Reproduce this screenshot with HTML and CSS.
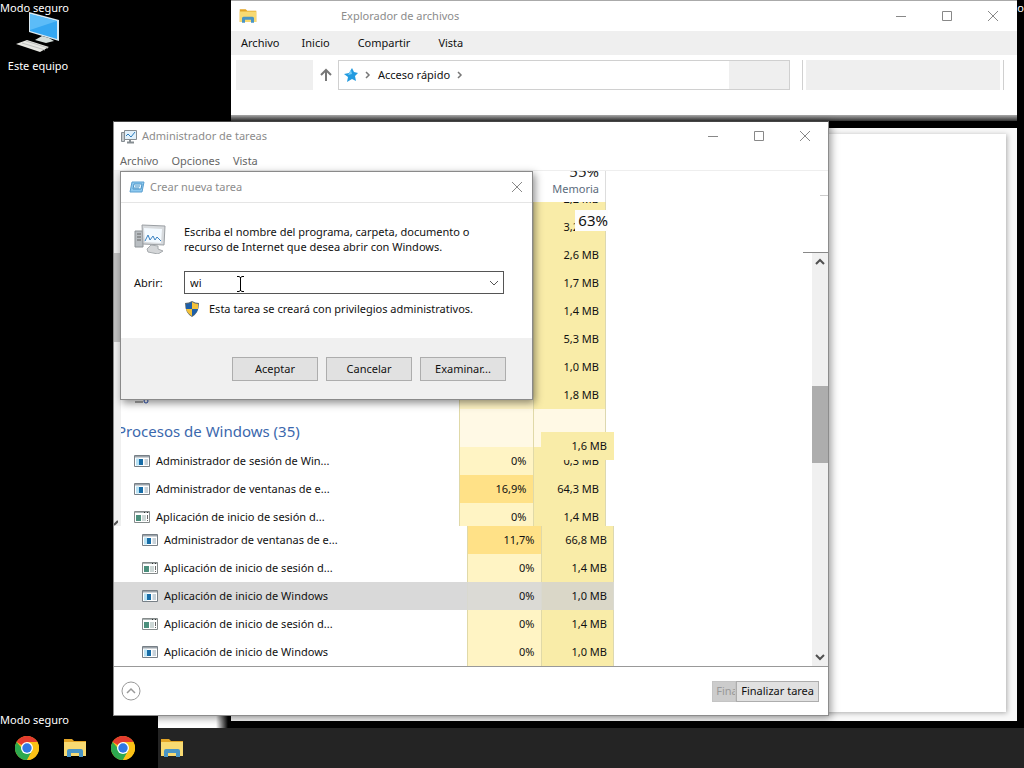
FILE: index.html
```html
<!DOCTYPE html>
<html lang="es">
<head>
  <meta charset="UTF-8">
  <meta name="viewport" content="width=device-width, initial-scale=1.0">
  <title>Administrador de tareas</title>
  <link rel="stylesheet" href="styles.css">
</head>
<body>
  <!-- shared icons -->
  <svg class="defs" width="0" height="0">
    <symbol id="folder" viewBox="0 0 24 20">
      <path d="M1 1h8l2 2h12v15H1z" fill="#e3a526"/>
      <path d="M1 4h22v14H1z" fill="#f8da72"/>
      <path d="M4 19v-6q0-2 2-2h12q2 0 2 2v6h-4v-4H8v4z" fill="#4a95c5"/>
    </symbol>
    <symbol id="chrome" viewBox="0 0 24 24">
      <circle cx="12" cy="12" r="12" fill="#fbc116"/>
      <path d="M12 12 1.600 6A12 12 0 0 1 22.400 6z" fill="#e33b2e"/>
      <path d="M12 12H6.800L1.600 6A12 12 0 0 0 12 24l5-9z" fill="#2da94f"/>
      <path d="M12 6h10.400A12 12 0 0 1 12 24l5.200-9z" fill="#fbc116"/>
      <circle cx="12" cy="12" r="6" fill="#fff"/>
      <circle cx="12" cy="12" r="4.700" fill="#2f78e4"/>
    </symbol>
    <symbol id="app" viewBox="0 0 16 12">
      <path d="M.5.5h15v11H.5z" fill="#fff" stroke="#777f86"/>
      <path d="M1 1h14v1.500H1z" fill="#9ba3aa"/>
      <path d="M2 3.500h3v7H2z" fill="#b9e2f4"/>
      <path d="M5 4h4v6H5z" fill="#176da8"/>
      <path d="M10.500 5H14M10.500 7H14M10.500 9H14" stroke="#8fa5b5"/>
    </symbol>
    <symbol id="app-green" viewBox="0 0 16 12">
      <path d="M.5.5h15v11H.5z" fill="#fff" stroke="#858b8b"/>
      <path d="M1 1h14v1H1z" fill="#adb5b5"/>
      <path d="M10 1h1v1h-1zM13 1h1v1h-1z" fill="#333"/>
      <path d="M2 4h5v6H2z" fill="#4b8f7c"/>
      <path d="M8 5h4M8 7h4M8 9h4" stroke="#9bb0ad"/>
      <path d="M13.500 4v4M13.500 9v1" stroke="#666"/>
    </symbol>
    <symbol id="monitor" viewBox="0 0 32 30">
      <path d="M1 7h8v16H1z" fill="#b9bec2" stroke="#8d9296"/>
      <path d="M3 10h4M3 13h4M3 16h4" stroke="#666"/>
      <path d="m8 1 23 1-1 19-21-1z" fill="#d7dadd" stroke="#9b9fa3"/>
      <path d="m10 4 18 1-1 14-16-1z" fill="#f4faff"/>
      <path d="m11 17 3-6 2 5 3-4 2 4 2-3 4 4" fill="none" stroke="#3b83c2"/>
      <path d="m17 21 7 1v3l5 2-5 3-10-2-1-3z" fill="#d4d6d8" stroke="#a6aaad"/>
    </symbol>
    <symbol id="monitor-small" viewBox="0 0 16 15">
      <path d="M.5 3.500h3v9h-3z" fill="#c5cacd" stroke="#868d92"/>
      <path d="M3.500 1.500h12v9h-12z" fill="#e2f1fb" stroke="#868d92"/>
      <path d="m5 7 2-2 3 3 4-5" fill="none" stroke="#2f7fc0"/>
      <path d="M9 11v2M6 13.500h7" stroke="#868d92" stroke-width="2"/>
    </symbol>
    <symbol id="min" viewBox="0 0 12 12"><path d="M1 6.500h10" fill="none" stroke="currentColor"/></symbol>
    <symbol id="max" viewBox="0 0 12 12"><path d="M1.500 1.500h9v9h-9z" fill="none" stroke="currentColor"/></symbol>
    <symbol id="close" viewBox="0 0 12 12"><path d="m1 1 10 10M11 1 1 11" fill="none" stroke="currentColor"/></symbol>
  </svg>

  <main class="desktop">
    <span class="safe-mode top-left">Modo seguro</span>
    <span class="safe-mode top-right">o</span>
    <span class="safe-mode bottom-left">Modo seguro</span>

    <a class="desktop-icon" href="#">
      <svg width="46" height="42" viewBox="0 0 46 42">
        <path d="m14 0 30 8v21l-30-9z" fill="#d9e9f2"/>
        <path d="m15 2 27 7v18l-27-8z" fill="#35a7f2"/>
        <path d="m15 2 27 7-27 9z" fill="#5cbcf8"/>
        <path d="m27 24 7 2 5 3-8 2-11-3z" fill="#d5dedb"/>
        <path d="m12 28 22 7-9 5-24-8z" fill="#e8e8e3"/>
        <path d="m7 31 23 7m-19-9 22 7" stroke="#c0c2c0" fill="none"/>
      </svg>
      <span>Este equipo</span>
    </a>

    <section class="ghost-window"><div class="ghost-page"></div></section>
    <div class="ghost-edge"></div>

    <section class="window explorer">
      <header class="titlebar">
        <svg width="18" height="16"><use href="#folder"/></svg>
        <h2>Explorador de archivos</h2>
        <div class="window-buttons">
          <button aria-label="Minimizar"><svg width="12" height="12"><use href="#min"/></svg></button>
          <button aria-label="Maximizar"><svg width="12" height="12"><use href="#max"/></svg></button>
          <button aria-label="Cerrar"><svg width="12" height="12"><use href="#close"/></svg></button>
        </div>
      </header>
      <nav class="ribbon">
        <a href="#">Archivo</a>
        <a href="#">Inicio</a>
        <a href="#">Compartir</a>
        <a href="#">Vista</a>
      </nav>
      <div class="address-row">
        <div class="history"></div>
        <button class="up" aria-label="Subir">
          <svg width="12" height="14" viewBox="0 0 12 14"><path d="M6 13V2M1 7l5-5 5 5" fill="none" stroke="#777" stroke-width="2"/></svg>
        </button>
        <div class="address">
          <svg width="14" height="14" viewBox="0 0 14 14"><path d="m8 0 2 4 4 1-3 3 1 5-4-2-5 3 1-5-4-3 5-1z" fill="#239be0"/><path d="m7 2 1 4-4 1z" fill="#76cef7"/></svg>
          <svg width="6" height="8" viewBox="0 0 6 8"><path d="m1 1 3 3-3 3" fill="none" stroke="#777" stroke-width="1.500"/></svg>
          <span>Acceso rápido</span>
          <svg width="6" height="8" viewBox="0 0 6 8"><path d="m1 1 3 3-3 3" fill="none" stroke="#777" stroke-width="1.500"/></svg>
          <div class="address-end"></div>
        </div>
        <input class="search" type="text" aria-label="Buscar">
      </div>
      <div class="explorer-edge"></div>
    </section>

    <section class="window tasks">
      <header class="titlebar">
        <svg width="16" height="15"><use href="#monitor-small"/></svg>
        <h1>Administrador de tareas</h1>
        <div class="window-buttons">
          <button aria-label="Minimizar"><svg width="12" height="12"><use href="#min"/></svg></button>
          <button aria-label="Maximizar"><svg width="12" height="12"><use href="#max"/></svg></button>
          <button aria-label="Cerrar"><svg width="12" height="12"><use href="#close"/></svg></button>
        </div>
      </header>
      <nav class="menu">
        <a href="#">Archivo</a>
        <a href="#">Opciones</a>
        <a href="#">Vista</a>
      </nav>

      <div class="content">
        <div class="lists">
          <div class="upper">
            <div class="gutter">
              <div class="gutter-thumb"></div>
              <svg width="4" height="6" viewBox="0 0 4 6"><path d="m0 5 4-4" stroke="#505050" stroke-width="2"/></svg>
            </div>
            <div class="upper-list">
              <div class="list-head">
                <div class="memory-head"><span class="total">55%</span><span>Memoria</span></div>
              </div>
              <div class="clip">
                <table class="first">
                  <tbody>
                    <tr><td></td><td></td><td>2,2 MB</td></tr>
                    <tr><td></td><td></td><td>3,2 MB</td></tr>
                    <tr><td></td><td></td><td>2,6 MB</td></tr>
                    <tr><td></td><td></td><td>1,7 MB</td></tr>
                    <tr><td></td><td></td><td>1,4 MB</td></tr>
                    <tr><td></td><td></td><td>5,3 MB</td></tr>
                    <tr><td></td><td></td><td>1,0 MB</td></tr>
                    <tr>
                      <td><svg class="service" width="16" height="16" viewBox="0 0 16 16"><circle cx="5" cy="5" r="4" fill="none" stroke="#888" stroke-width="2"/><path d="M1 14h8" stroke="#555"/><circle cx="12" cy="13" r="2" fill="none" stroke="#2b4fb0"/></svg></td>
                      <td></td><td>1,8 MB</td>
                    </tr>
                    <tr class="group"><th>Procesos de Windows (35)</th><td></td><td></td></tr>
                    <tr><td><svg width="16" height="12"><use href="#app"/></svg>Administrador de sesión de Win...</td><td>0%</td><td>0,3 MB</td></tr>
                    <tr><td><svg width="16" height="12"><use href="#app"/></svg>Administrador de ventanas de e...</td><td class="hot">16,9%</td><td>64,3 MB</td></tr>
                    <tr><td><svg width="16" height="12"><use href="#app-green"/></svg>Aplicación de inicio de sesión d...</td><td>0%</td><td>1,4 MB</td></tr>
                  </tbody>
                </table>
              </div>
              <span class="stray stray-total">63%</span>
              <span class="stray stray-cell">1,6 MB</span>
            </div>
          </div>
          <table class="second">
            <tbody>
              <tr><td><svg width="16" height="12"><use href="#app"/></svg>Administrador de ventanas de e...</td><td class="hot">11,7%</td><td>66,8 MB</td></tr>
              <tr><td><svg width="16" height="12"><use href="#app-green"/></svg>Aplicación de inicio de sesión d...</td><td>0%</td><td>1,4 MB</td></tr>
              <tr class="selected"><td><svg width="16" height="12"><use href="#app"/></svg>Aplicación de inicio de Windows</td><td>0%</td><td>1,0 MB</td></tr>
              <tr><td><svg width="16" height="12"><use href="#app-green"/></svg>Aplicación de inicio de sesión d...</td><td>0%</td><td>1,4 MB</td></tr>
              <tr><td><svg width="16" height="12"><use href="#app"/></svg>Aplicación de inicio de Windows</td><td>0%</td><td>1,0 MB</td></tr>
            </tbody>
          </table>
        </div>
        <div class="side">
          <div class="side-line"></div>
          <div class="side-head"></div>
          <div class="scrollbar">
            <svg width="10" height="8" viewBox="0 0 10 8"><path d="m1 6 4-4 4 4" fill="none" stroke="#505050" stroke-width="2"/></svg>
            <div class="thumb"></div>
            <svg width="10" height="8" viewBox="0 0 10 8"><path d="m1 2 4 4 4-4" fill="none" stroke="#505050" stroke-width="2"/></svg>
          </div>
        </div>
      </div>

      <footer class="task-footer">
        <button class="less" aria-label="Menos detalles">
          <svg width="20" height="20" viewBox="0 0 20 20"><circle cx="10" cy="10" r="9" fill="none" stroke="#999"/><path d="m6 12 4-4 4 4" fill="none" stroke="#999" stroke-width="1.500"/></svg>
        </button>
        <button class="end-task old" disabled>Fina</button>
        <button class="end-task">Finalizar tarea</button>
      </footer>
    </section>

    <section class="window dialog">
      <header class="titlebar">
        <svg width="16" height="12" viewBox="0 0 16 12"><path d="M3 1h12l-2 10H1z" fill="#8ec9ef" stroke="#5a9fd0"/><path d="M5 3h8l-1 5H4z" fill="#e6f5fd" stroke="#4b94c8"/><path d="M6 5h5M5 7h5" stroke="#4b94c8"/></svg>
        <h2>Crear nueva tarea</h2>
        <button aria-label="Cerrar"><svg width="12" height="12"><use href="#close"/></svg></button>
      </header>
      <form>
        <div class="dialog-body">
          <svg width="32" height="30"><use href="#monitor"/></svg>
          <p>Escriba el nombre del programa, carpeta, documento o recurso de Internet que desea abrir con Windows.</p>
          <label for="open">Abrir:</label>
          <div class="combo">
            <input id="open" type="text" value="wi">
            <button type="button" aria-label="Mostrar lista"><svg width="10" height="8" viewBox="0 0 10 8"><path d="m1 2 4 4 4-4" fill="none" stroke="#555"/></svg></button>
          </div>
          <div class="admin-note">
            <svg width="16" height="16" viewBox="0 0 16 16">
              <path d="M8 0q3 2 7 2 0 10-7 14Q1 12 1 2q4 0 7-2z" fill="#5c6a72"/>
              <path d="M8 1v7H2V3q3 0 6-2zM8 8h6q-1 4-6 7z" fill="#1e5fa8"/>
              <path d="M8 1q3 2 6 2v5H8zM2 8h6v7Q3 12 2 8z" fill="#f3c13a"/>
            </svg>
            <span>Esta tarea se creará con privilegios administrativos.</span>
          </div>
        </div>
        <div class="dialog-buttons">
          <button type="button">Aceptar</button>
          <button type="button">Cancelar</button>
          <button type="button">Examinar...</button>
        </div>
      </form>
    </section>

    <svg class="cursor" width="9" height="16" viewBox="0 0 9 16"><path d="M1 .5h2l1.500 1L6 .5h2M4.500 1v14M1 15.500h2l1.500-1 1.500 1h2" fill="none" stroke="#000"/></svg>

    <nav class="taskbar">
      <div class="pinned">
        <a href="#" aria-label="Chrome"><svg width="24" height="24"><use href="#chrome"/></svg></a>
        <a href="#" aria-label="Explorador"><svg width="24" height="20"><use href="#folder"/></svg></a>
        <a href="#" aria-label="Chrome"><svg width="24" height="24"><use href="#chrome"/></svg></a>
      </div>
      <a href="#" aria-label="Explorador"><svg width="24" height="20"><use href="#folder"/></svg></a>
    </nav>
  </main>
</body>
</html>
```
FILE: styles.css
```css
* {
  box-sizing: border-box;
}
body {
  margin: 0;
  font-family: "Noto Sans", "Open Sans", sans-serif;
  font-size: 11px;
  line-height: 16px;
  color: #111;
  background: #000;
}
h1, h2, p {
  margin: 0;
  font-size: 11px;
  font-weight: normal;
}
a {
  color: inherit;
  text-decoration: none;
}
button, input {
  font: inherit;
  color: inherit;
}
svg {
  display: block;
  flex: none;
}
.defs {
  position: absolute;
}
.desktop {
  position: relative;
  height: 100vh;
  min-height: 720px;
  overflow: hidden;
}

/* desktop */
.safe-mode {
  position: absolute;
  color: #fff;
}
.top-left {
  top: 0;
  left: 0;
}
.top-right {
  top: 0;
  right: 0;
}
.bottom-left {
  left: 0;
  bottom: 40px;
}
.desktop-icon {
  position: absolute;
  top: 12px;
  left: 0;
  width: 76px;
  display: flex;
  flex-direction: column;
  align-items: center;
  gap: 4px;
  color: #fff;
}

/* windows */
.window {
  position: absolute;
  display: flex;
  flex-direction: column;
  background: #fff;
}
.titlebar {
  display: flex;
  align-items: center;
  color: #8c8c8c;
}
.titlebar button {
  display: flex;
  padding: 0;
  border: 0;
  background: none;
  color: #888;
}
.window-buttons {
  display: flex;
  gap: 34px;
  margin-left: auto;
}

.ghost-window {
  position: absolute;
  top: 128px;
  left: 231px;
  right: 7px;
  bottom: 47px;
  padding: 6px 11px 9px 0;
  background: #f8f8f8;
  box-shadow: 0 0 4px 2px #000;
}
.ghost-page {
  height: 100%;
  background: #fff;
  box-shadow: 1px 1px 5px #aaa;
}
.ghost-edge {
  position: absolute;
  left: 158px;
  bottom: 40px;
  width: 73px;
  height: 14px;
  background: linear-gradient(90deg, #fff 0 58px, #000 70px);
}

.explorer {
  top: 0;
  left: 231px;
  right: 7px;
  border-top: 1px solid #aaa;
}
.explorer .titlebar {
  height: 30px;
  padding: 0 18px 0 8px;
}
.explorer h2 {
  margin-left: 84px;
}
.ribbon {
  display: flex;
  height: 24px;
  padding: 4px 10px;
  background: #efefef;
}
.ribbon a {
  margin-right: 22px;
}
.ribbon a:nth-child(2), .ribbon a:nth-child(3) {
  margin-right: 28px;
}
.address-row {
  display: flex;
  height: 60px;
  padding: 5px 13px 25px 5px;
}
.history {
  width: 77px;
  background: #efefef;
}
.up {
  display: flex;
  align-items: center;
  justify-content: center;
  width: 25px;
  padding: 0;
  border: 0;
  background: none;
}
.address {
  flex: 1;
  display: flex;
  align-items: center;
  gap: 7px;
  padding-left: 5px;
  border: 1px solid #d0d0d0;
}
.address-end {
  align-self: stretch;
  width: 60px;
  margin-left: auto;
  background: #efefef;
}
.search {
  width: 202px;
  margin-left: 12px;
  padding: 0;
  border: 1px solid #d0d0d0;
  border-width: 0 1px;
  background: #efefef;
  box-shadow: inset 3px 0 #fff, inset -3px 0 #fff;
}
.explorer-edge {
  height: 6px;
  background: linear-gradient(#aaa, #333);
}

/* task manager */
.tasks {
  top: 121px;
  left: 113px;
  width: 716px;
  border: 1px solid #8c8c8c;
  border-top-color: #444;
  box-shadow: 2px 2px 8px rgba(0, 0, 0, 0.4);
}
.tasks .titlebar {
  height: 28px;
  padding: 0 17px 0 7px;
}
.tasks h1 {
  margin-left: 5px;
}
.menu {
  display: flex;
  gap: 13px;
  height: 21px;
  padding: 3px 6px;
  border-bottom: 1px solid #eee;
  color: #666;
}
.content {
  display: flex;
  border-bottom: 1px solid #999;
}
.lists {
  width: 500px;
}
.upper {
  display: flex;
}
.gutter {
  width: 7px;
  padding-top: 82px;
  background: #f0f0f0;
}
.gutter-thumb {
  height: 89px;
  margin-bottom: 178px;
  background: #c1c1c1;
}
.upper-list {
  position: relative;
  width: 485px;
}
.list-head {
  height: 31px;
  overflow: hidden;
  border-right: 1px solid #ddd;
}
.memory-head {
  display: flex;
  flex-direction: column;
  align-items: flex-end;
  padding-right: 6px;
  color: #5c6b7c;
}
.total {
  height: 10px;
  line-height: 0;
  font-size: 15px;
  color: #222;
}
.clip {
  height: 324px;
  overflow: hidden;
}
table {
  width: 100%;
  table-layout: fixed;
  border-collapse: separate;
  border-spacing: 0;
}
.first {
  margin-top: -17px;
}
tr {
  height: 28px;
}
td, th {
  padding: 0;
}
td:first-child svg {
  display: inline-block;
  vertical-align: -2px;
  margin-right: 6px;
}
td:first-child .service {
  vertical-align: middle;
}
.first td:first-child {
  width: 338px;
  padding-left: 13px;
}
.second td:first-child {
  width: 353px;
  padding-left: 28px;
}
td:nth-child(2), td:nth-child(3) {
  padding-right: 6px;
  border-left: 1px solid #e0d9a8;
  text-align: right;
}
td:nth-child(2) {
  background: #fff4c4;
}
td:nth-child(3) {
  border-right: 1px solid #ddd8b0;
  background: #f9eca8;
}
td.hot {
  background: #ffe187;
}
.group {
  height: 38px;
}
.group th {
  overflow: hidden;
  padding-top: 6px;
  text-indent: -4px;
  text-align: left;
  font-size: 15px;
  font-weight: normal;
  color: #3b68ad;
}
.group td:nth-child(2), .group td:nth-child(3) {
  background: #fff9e5;
}
.selected td:first-child {
  background: #d9d9d9;
}
.selected td:nth-child(2) {
  border-color: #d9d9d0;
  background: #dbdad5;
}
.selected td:nth-child(3) {
  border-color: #d9d9d0;
  background: #dad7c8;
}
.stray {
  position: absolute;
  text-align: right;
}
.stray-total {
  top: 39px;
  right: -2px;
  width: 33px;
  line-height: 21px;
  font-size: 15px;
  background: #fdfdfd;
}
.stray-cell {
  top: 261px;
  right: -8px;
  width: 73px;
  padding-right: 7px;
  line-height: 28px;
  background: #f9eca8;
}
.side {
  flex: 1;
  display: flex;
  flex-direction: column;
  align-items: flex-end;
}
.side-line {
  width: 8px;
  height: 25px;
  border-bottom: 1px solid #ccc;
}
.side-head {
  width: 25px;
  height: 57px;
  border-bottom: 1px solid #888;
}
.scrollbar {
  flex: 1;
  display: flex;
  flex-direction: column;
  align-items: center;
  justify-content: space-between;
  width: 16px;
  padding: 5px 0;
  background: #f0f0f0;
}
.thumb {
  width: 100%;
  height: 77px;
  margin-bottom: 70px;
  background: #adadad;
}
.task-footer {
  display: flex;
  align-items: center;
  height: 48px;
  padding: 0 9px 0 7px;
}
.less {
  margin-right: auto;
  padding: 0;
  border: 0;
  background: none;
}
.end-task {
  height: 21px;
  padding: 0 4px;
  line-height: 16px;
  border: 1px solid #adadad;
  background: #e1e1e1;
}
.old {
  width: 24px;
  padding: 0 0 0 3px;
  overflow: hidden;
  text-align: left;
  color: #999;
  background: #ccc;
  border-color: #c4c4c4;
}

/* new task dialog */
.dialog {
  top: 171px;
  left: 120px;
  width: 413px;
  border: 1px solid #8a8a8a;
  box-shadow: 2px 3px 8px rgba(0, 0, 0, 0.45);
}
.dialog .titlebar {
  height: 31px;
  padding: 0 9px 0 8px;
  border-bottom: 1px solid #e5e5e5;
}
.dialog h2 {
  flex: 1;
  margin-left: 5px;
}
.dialog-body {
  display: grid;
  grid-template-columns: 50px 320px;
  grid-template-rows: 32px 23px 16px;
  row-gap: 16px;
  align-items: center;
  height: 135px;
  padding: 20px 28px 0 13px;
}
.dialog-body p {
  line-height: 15px;
}
.combo {
  display: flex;
  height: 23px;
  border: 1px solid #555;
}
.combo input {
  flex: 1;
  padding: 0 5px;
  border: 0;
  outline: 0;
}
.combo button {
  display: flex;
  align-items: center;
  width: 17px;
  padding: 0 3px;
  border: 0;
  background: none;
}
.admin-note {
  grid-column: 2;
  display: flex;
  gap: 9px;
  margin-top: -18px;
}
.dialog-buttons {
  display: flex;
  justify-content: flex-end;
  gap: 8px;
  height: 61px;
  padding: 19px 26px 0 0;
  background: #f0f0f0;
}
.dialog-buttons button {
  width: 86px;
  height: 24px;
  padding: 0;
  border: 1px solid #adadad;
  background: #e1e1e1;
}
.cursor {
  position: absolute;
  top: 276px;
  left: 236px;
}

/* taskbar */
.taskbar {
  position: absolute;
  left: 0;
  right: 0;
  bottom: 0;
  display: flex;
  align-items: center;
  height: 40px;
  background: #242424;
}
.pinned {
  display: flex;
  align-items: center;
  gap: 24px;
  width: 158px;
  height: 40px;
  margin-right: 2px;
  padding-left: 15px;
  background: #000;
}
```
